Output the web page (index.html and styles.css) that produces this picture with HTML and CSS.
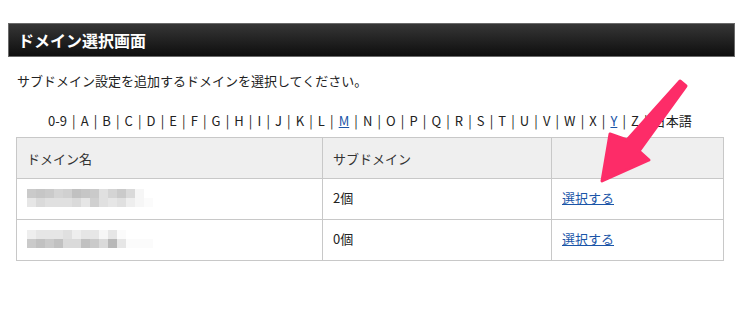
FILE: index.html
```html
<!DOCTYPE html>
<html lang="ja">
<head>
    <meta charset="UTF-8">
    <title>ドメイン選択画面</title>
    <link rel="stylesheet" href="styles.css">
</head>
<body>
    <div class="page">
        <h1 class="title-bar">ドメイン選択画面</h1>

        <p class="lead">サブドメイン設定を追加するドメインを選択してください。</p>

        <p class="index-nav">0-9 | A | B | C | D | E | F | G | H | I | J | K | L | <a href="#">M</a> | N | O | P | Q | R | S | T | U | V | W | X | <a href="#">Y</a> | Z | 日本語</p>

        <table class="domain-table">
            <thead>
                <tr>
                    <th class="col-name">ドメイン名</th>
                    <th class="col-sub">サブドメイン</th>
                    <th class="col-action"></th>
                </tr>
            </thead>
            <tbody>
                <tr>
                    <td>
                        <div class="mosaic">
                            <div class="mosaic-row">
                                <span class="g4"></span><span class="g3"></span><span class="g4"></span><span class="g6"></span><span class="g5"></span><span class="g2"></span><span class="g3"></span><span class="g4"></span><span class="g8"></span><span class="g6"></span><span class="g4"></span><span class="g7"></span><span class="g11"></span>
                            </div>
                            <div class="mosaic-row">
                                <span class="g9"></span><span class="g7"></span><span class="g8"></span><span class="g8"></span><span class="g8"></span><span class="g7"></span><span class="g9"></span><span class="g5"></span><span class="g8"></span><span class="g9"></span><span class="g8"></span><span class="g10"></span><span class="g11"></span><span class="g12"></span>
                            </div>
                        </div>
                    </td>
                    <td>2個</td>
                    <td><a href="#">選択する</a></td>
                </tr>
                <tr>
                    <td>
                        <div class="mosaic">
                            <div class="mosaic-row">
                                <span class="g10"></span><span class="g9"></span><span class="g9"></span><span class="g9"></span><span class="g8"></span><span class="g10"></span><span class="g9"></span><span class="g9"></span><span class="g11"></span><span class="g9"></span><span class="g12"></span>
                            </div>
                            <div class="mosaic-row">
                                <span class="g4"></span><span class="g2"></span><span class="g4"></span><span class="g2"></span><span class="g7"></span><span class="g7"></span><span class="g2"></span><span class="g4"></span><span class="g7"></span><span class="g1"></span><span class="g9"></span><span class="g12"></span><span class="g12"></span><span class="g12"></span>
                            </div>
                        </div>
                    </td>
                    <td>0個</td>
                    <td><a href="#">選択する</a></td>
                </tr>
            </tbody>
        </table>
    </div>

    <svg class="arrow" width="745" height="330" viewBox="0 0 745 330">
        <polygon points="602,181 610,134 627,140 680,81 686,86 639,151 649,160"
                 fill="#fd2c68" stroke="#fd2c68" stroke-width="3" stroke-linejoin="round"/>
    </svg>
</body>
</html>
```

FILE: styles.css
```css
body {
    margin: 0;
    font-family: "Noto Sans CJK JP", sans-serif;
    font-size: 13px;
    color: #222;
    background: #fff;
}

.page {
    padding: 23px 10px 0 8px;
}

.title-bar {
    margin: 0;
    height: 32px;
    line-height: 32px;
    padding-left: 9px;
    font-size: 16px;
    font-weight: bold;
    color: #fff;
    background: linear-gradient(#363636, #0e0e0e);
    border: 1px solid #6a6a6a;
}

.lead {
    margin: 14px 0 0 9px;
    line-height: 20px;
}

.index-nav {
    margin: 20px 0 0 40px;
    line-height: 20px;
    word-spacing: 2.2px;
}

a {
    color: #1a55a8;
    text-decoration: underline;
}

.domain-table {
    margin: 6px 0 0 8px;
    width: 708px;
    border-collapse: collapse;
}

.domain-table th,
.domain-table td {
    border: 1px solid #c8c8c8;
    padding: 0 10px;
    text-align: left;
    font-weight: normal;
}

.domain-table th {
    height: 40px;
    background: #efefef;
    color: #333;
}

.domain-table td {
    height: 37px;
    padding-bottom: 3px;
}

.col-name {
    width: 285px;
}

.col-sub {
    width: 208px;
}

.mosaic {
    display: flex;
    flex-direction: column;
}

.mosaic-row {
    display: flex;
}

.mosaic-row span {
    width: 9px;
    height: 9px;
}

.g1 { background: #b8b8b8; }
.g2 { background: #c1c1c1; }
.g3 { background: #c6c6c6; }
.g4 { background: #cacaca; }
.g5 { background: #d0d0d0; }
.g6 { background: #d4d4d4; }
.g7 { background: #dadada; }
.g8 { background: #e0e0e0; }
.g9 { background: #e6e6e6; }
.g10 { background: #eeeeee; }
.g11 { background: #f6f6f6; }
.g12 { background: #fbfbfb; }

.arrow {
    position: absolute;
    left: 0;
    top: 0;
    pointer-events: none;
}
```
